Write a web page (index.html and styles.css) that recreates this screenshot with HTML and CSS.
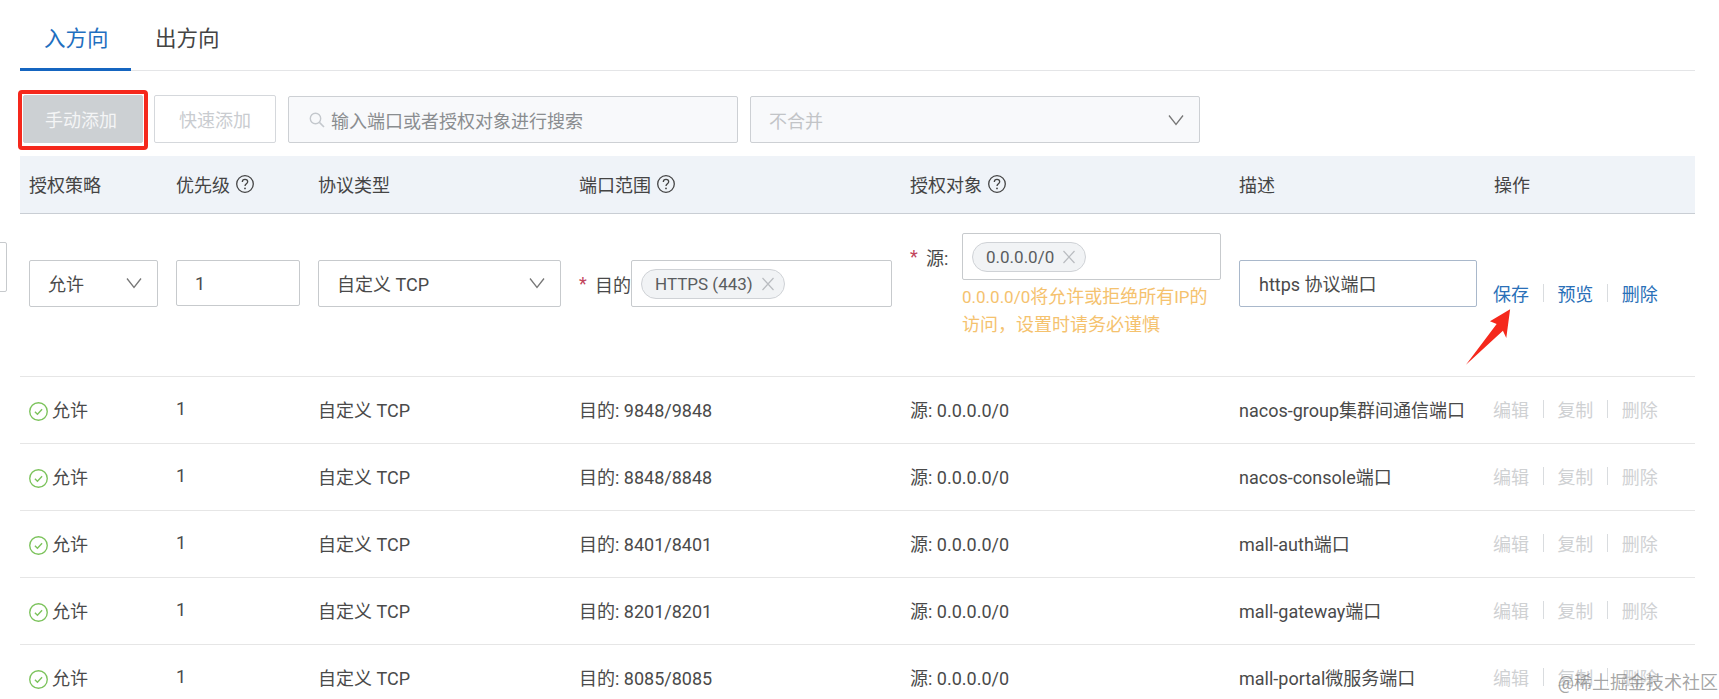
FILE: index.html
```html
<!DOCTYPE html>
<html lang="zh-CN">
<head>
<meta charset="utf-8">
<title>安全组规则</title>
<link rel="stylesheet" href="styles.css">
</head>
<body>
<svg class="defs" width="0" height="0" aria-hidden="true">
  <defs>
    <symbol id="chev" viewBox="0 0 16 12"><path d="M1 1.5 8 10.5 15 1.5" fill="none" stroke="currentColor" stroke-width="1.3"/></symbol>
    <symbol id="help" viewBox="0 0 18 18"><circle cx="9" cy="9" r="8.3" fill="none" stroke="currentColor" stroke-width="1.3"/><path d="M6.300 7C6.300 5.300 7.500 4.300 9 4.300s2.700 1 2.700 2.500c0 2-2.700 2.100-2.700 4.300" fill="none" stroke="currentColor" stroke-width="1.3"/><circle cx="9" cy="13.400" r=".9" fill="currentColor"/></symbol>
    <symbol id="ok" viewBox="0 0 18 18"><circle cx="9" cy="9" r="8.300" fill="none" stroke="#7cc35c" stroke-width="1.300"/><path d="M5.600 9.200 8 11.600 12.400 6.800" fill="none" stroke="#7cc35c" stroke-width="1.300"/></symbol>
    <symbol id="x" viewBox="0 0 14 14"><path d="M1.500 1 12.500 13M12.500 1 1.500 13" fill="none" stroke="currentColor" stroke-width="1.200"/></symbol>
  </defs>
</svg>
<main class="page">
  <nav class="tabs">
    <a class="tab tab-active">入方向</a>
    <a class="tab">出方向</a>
  </nav>

  <div class="toolbar">
    <button class="btn btn-primary">手动添加</button>
    <button class="btn btn-ghost">快速添加</button>
    <div class="search">
      <svg class="search-icon" viewBox="0 0 16 16"><circle cx="6.500" cy="6.500" r="5.200" fill="none" stroke="#c4c8cd" stroke-width="1.400"/><path d="M10.400 10.400 15 15" stroke="#c4c8cd" stroke-width="1.600"/></svg>
      <span>输入端口或者授权对象进行搜索</span>
    </div>
    <div class="merge">
      <span>不合并</span>
      <svg class="chev"><use href="#chev"/></svg>
    </div>
  </div>

  <div class="row head">
    <div class="cell">授权策略</div>
    <div class="cell">优先级<svg class="help"><use href="#help"/></svg></div>
    <div class="cell">协议类型</div>
    <div class="cell">端口范围<svg class="help"><use href="#help"/></svg></div>
    <div class="cell">授权对象<svg class="help"><use href="#help"/></svg></div>
    <div class="cell">描述</div>
    <div class="cell">操作</div>
  </div>

  <div class="row edit">
    <div class="cell at-input"><div class="field policy"><span>允许</span><svg class="chev"><use href="#chev"/></svg></div></div>
    <div class="cell at-input"><div class="field priority">1</div></div>
    <div class="cell at-input"><div class="field proto"><span>自定义 TCP</span><svg class="chev"><use href="#chev"/></svg></div></div>
    <div class="cell at-input port">
      <span class="label"><i class="req">*</i>目的</span>
      <div class="field tagbox"><span class="tag">HTTPS (443)<svg class="x"><use href="#x"/></svg></span></div>
    </div>
    <div class="cell source">
      <div class="source-line">
        <span class="label"><i class="req">*</i>源:</span>
        <div class="field tagbox"><span class="tag">0.0.0.0/0<svg class="x"><use href="#x"/></svg></span></div>
      </div>
      <p class="warn"><span class="latin">0.0.0.0/0</span>将允许或拒绝所有<span class="latin">IP</span>的<br>访问，设置时请务必谨慎</p>
    </div>
    <div class="cell at-input"><div class="field desc">https 协议端口</div></div>
    <div class="cell ops at-ops"><a class="link">保存</a><i class="sep"></i><a class="link">预览</a><i class="sep"></i><a class="link">删除</a></div>
  </div>

  <div class="row data">
    <div class="cell"><svg class="ok"><use href="#ok"/></svg>允许</div><div class="cell">1</div><div class="cell">自定义 TCP</div><div class="cell">目的: 9848/9848</div><div class="cell">源: 0.0.0.0/0</div><div class="cell">nacos-group集群间通信端口</div>
    <div class="cell ops off"><a>编辑</a><i class="sep"></i><a>复制</a><i class="sep"></i><a>删除</a></div>
  </div>
  <div class="row data">
    <div class="cell"><svg class="ok"><use href="#ok"/></svg>允许</div><div class="cell">1</div><div class="cell">自定义 TCP</div><div class="cell">目的: 8848/8848</div><div class="cell">源: 0.0.0.0/0</div><div class="cell">nacos-console端口</div>
    <div class="cell ops off"><a>编辑</a><i class="sep"></i><a>复制</a><i class="sep"></i><a>删除</a></div>
  </div>
  <div class="row data">
    <div class="cell"><svg class="ok"><use href="#ok"/></svg>允许</div><div class="cell">1</div><div class="cell">自定义 TCP</div><div class="cell">目的: 8401/8401</div><div class="cell">源: 0.0.0.0/0</div><div class="cell">mall-auth端口</div>
    <div class="cell ops off"><a>编辑</a><i class="sep"></i><a>复制</a><i class="sep"></i><a>删除</a></div>
  </div>
  <div class="row data">
    <div class="cell"><svg class="ok"><use href="#ok"/></svg>允许</div><div class="cell">1</div><div class="cell">自定义 TCP</div><div class="cell">目的: 8201/8201</div><div class="cell">源: 0.0.0.0/0</div><div class="cell">mall-gateway端口</div>
    <div class="cell ops off"><a>编辑</a><i class="sep"></i><a>复制</a><i class="sep"></i><a>删除</a></div>
  </div>
  <div class="row data">
    <div class="cell"><svg class="ok"><use href="#ok"/></svg>允许</div><div class="cell">1</div><div class="cell">自定义 TCP</div><div class="cell">目的: 8085/8085</div><div class="cell">源: 0.0.0.0/0</div><div class="cell">mall-portal微服务端口</div>
    <div class="cell ops off"><a>编辑</a><i class="sep"></i><a>复制</a><i class="sep"></i><a>删除</a></div>
  </div>
</main>

<div class="clipped-field"></div>
<div class="red-box"></div>
<svg class="arrow" viewBox="0 0 50 60"><path d="M47 1 43 31 39.500 23.500 1 59 33 16.500 26 13.500Z" fill="#f5281c"/></svg>
<div class="watermark">@稀土掘金技术社区</div>
</body>
</html>
```

FILE: styles.css
```css
* { box-sizing: border-box; }
html, body { margin: 0; height: 699px; overflow: hidden; background: #fff; }
body {
  position: relative;
  font-family: "Roboto", "Noto Sans CJK SC", sans-serif;
  font-size: 18px;
  font-weight: 400;
  color: #4a4a4a;
}
.defs { position: absolute; }
svg { display: block; flex: none; }
.page { margin-left: 20px; width: 1675px; }

/* tabs */
.tabs { display: flex; height: 71px; border-bottom: 1px solid #e4e5e7; }
.tab { width: 111px; height: 71px; padding-left: 24px; font-size: 21.5px; line-height: 77px; color: #444; }
.tab-active { color: #1f6fc0; border-bottom: 3px solid #1565c0; }

/* toolbar */
.toolbar { display: flex; align-items: flex-start; margin-top: 24px; height: 48px; margin-left: 3px; }
.btn { height: 48px; padding: 0; border: 1px solid #d5d8dc; border-radius: 2px; font: inherit; text-align: center; }
.btn-primary { width: 120px; background: #ccd0d3; color: #f4f5f6; border-color: #ccd0d3; padding-right: 4px; }
.btn-ghost { width: 122px; background: #fff; color: #c9ccd0; margin-left: 11px; }
.search, .merge {
  display: flex; align-items: center; height: 47px; margin-top: 1px;
  background: #f8f9fb; border: 1px solid #cdd0d4; border-radius: 2px;
}
.search { width: 450px; margin-left: 12px; padding-left: 20px; color: #8a8d90; }
.search-icon { width: 16px; height: 16px; margin-right: 6px; }
.merge { width: 450px; margin-left: 12px; padding: 0 15px 0 18px; justify-content: space-between; color: #c2c4c7; }
.chev { width: 16px; height: 12px; color: #777; }

/* table */
.row { display: grid; grid-template-columns: 147px 142px 261px 331px 329px 255px 210px; }
.cell { padding-left: 9px; }
.head { margin-top: 13px; height: 58px; align-items: center; padding-bottom: 2px; background: #eff3f8; border-bottom: 1px solid #c9ced4; color: #444; }
.head .cell { display: flex; align-items: center; }
.help { width: 18px; height: 18px; margin-left: 6px; color: #444; }

.edit { height: 163px; padding-top: 19px; align-items: start; border-bottom: 1px solid #e6e6e6; }
.at-input { margin-top: 27px; }
.at-ops { margin-top: 47px; }
.field {
  display: flex; align-items: center; height: 47px; padding-bottom: 2px;
  background: #fff; border: 1px solid #c7cacd; border-radius: 2px;
}
.policy { width: 129px; padding-left: 18px; padding-right: 15px; justify-content: space-between; }
.priority { width: 124px; height: 46px; padding-left: 18px; padding-bottom: 0; }
.proto { width: 243px; padding-left: 18px; padding-right: 15px; justify-content: space-between; }
.desc { width: 238px; padding-left: 19px; border-color: #a9b8cb; }
.port { display: flex; align-items: center; }
.label { display: flex; align-items: center; flex: none; }
.req { font-style: normal; color: #c2445c; margin-right: 5px; width: 11px; }
.port .label { width: 52px; }
.port .tagbox { width: 261px; padding-left: 9px; padding-bottom: 0; }
.source-line { display: flex; align-items: center; }
.source-line .label { width: 52px; }
.source-line .tagbox { width: 259px; padding-left: 9px; padding-bottom: 0; }
.tag {
  display: flex; align-items: center; height: 30px; padding: 0 9px 0 13px;
  background: #f1f3f5; border: 1px solid #cfd2d6; border-radius: 15px; color: #5a5d60; font-size: 17px;
}
.x { width: 14px; height: 14px; margin-left: 8px; color: #b9bcc0; }
.warn { margin: 3px 0 0 52px; font-size: 18px; line-height: 27px; color: #f5c26e; white-space: nowrap; }
.latin { font-size: 17px; }

.ops { display: flex; align-items: center; padding-left: 8px; }
.link { color: #2a70b8; }
.sep { width: 1px; height: 18px; margin: 0 13.7px; background: #d9dcdf; }
.data { height: 67px; align-items: center; padding-bottom: 3px; border-bottom: 1px solid #e6e6e6; }
.data .cell:first-child { display: flex; align-items: center; }
.ok { width: 19px; height: 19px; margin: 5px 4px 0 0; }
.off { color: #cfd1d3; }

/* overlays: annotations painted on top of the screenshot */
.clipped-field { position: absolute; left: -4px; top: 242px; width: 11px; height: 50px; border: 1px solid #c7cacd; border-radius: 2px; }
.red-box { position: absolute; left: 18px; top: 90px; width: 130px; height: 60px; border: 4px solid #f5281c; border-radius: 4px; }
.arrow { position: absolute; left: 1465px; top: 307px; width: 48px; height: 60px; }
.watermark { position: absolute; right: 1px; top: 670px; font-size: 18px; line-height: 26px; color: rgba(90, 90, 90, .55); white-space: nowrap; }
```
